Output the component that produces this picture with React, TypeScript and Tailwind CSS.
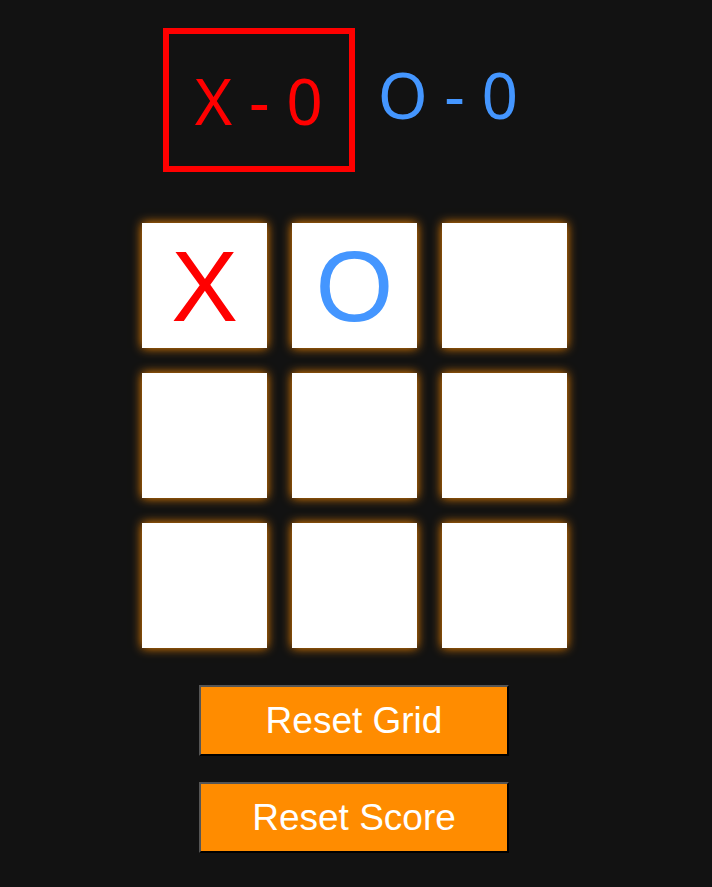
import React from "react";

const cells: string[] = ["X", "O", "", "", "", "", "", "", ""];

const btn =
  "w-[310px] h-[71px] bg-[#ff8c00] text-white text-[37px] [font-family:'Liberation_Sans',Arial,sans-serif] border-2 border-t-[#555] border-l-[#555] border-b-[#000] border-r-[#000]";

export default function App() {
  return (
    <div className="min-h-[887px] w-full bg-[#121212] flex flex-col items-center pt-[28px]">
      <div className="mr-[4px] flex items-stretch text-[64px] leading-[64px] [font-family:'Noto_Sans','Open_Sans',sans-serif]">
        <div className="border-[6px] border-[#ff0000] text-[#ff0000] pt-[35px] pb-[33px] px-[26px] whitespace-pre">
          X - 0
        </div>
        <div className="text-[#4496ff] pt-[35px] pl-[23px] pr-[27px] whitespace-pre">O - 0</div>
      </div>
      <div className="mr-[3px] mt-[51px] grid grid-cols-[125px_125px_125px] gap-[25px]">
        {cells.map((c, i) => (
          <div
            key={i}
            className={`w-[125px] h-[125px] bg-white flex items-center justify-center shadow-[0_0_10px_#ff8c00] text-[100px] leading-none [font-family:'Liberation_Sans',Arial,sans-serif] ${
              c === "X" ? "text-[#ff0000]" : "text-[#4496ff]"
            }`}
          >
            {c}
          </div>
        ))}
      </div>
      <div className="mr-[4px] mt-[37px] flex flex-col gap-[26px]">
        <button className={btn}>Reset Grid</button>
        <button className={btn}>Reset Score</button>
      </div>
    </div>
  );
}
